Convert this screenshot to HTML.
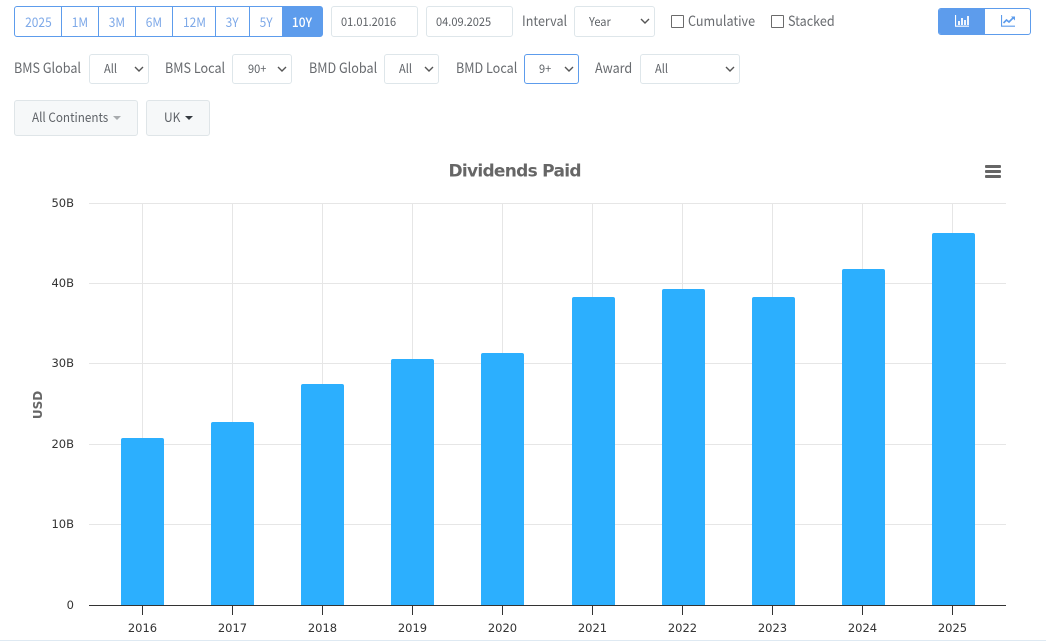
<!DOCTYPE html>
<html><head><meta charset="utf-8">
<style>
html,body{margin:0;padding:0;background:#fff;width:1046px;height:641px;overflow:hidden}
body{position:relative;font-family:"Noto Sans CJK SC","Liberation Sans",sans-serif;color:#66696d}
.a{position:absolute;box-sizing:border-box;white-space:nowrap}
.lbl{font-size:14px;line-height:20px;color:#686b6f;transform:scaleX(.9);transform-origin:left center}
.t{display:inline-block;transform:scaleX(.92);transform-origin:left center}
.in{border:1px solid #dee6ea;border-radius:3px;background:#fff;font-size:12px;color:#5f6368;line-height:29px}
.r2{line-height:27px}
.b{position:absolute;top:6px;height:31px;box-sizing:border-box;text-align:center;font-size:13px;line-height:29px;color:#7ea9e8;border:1px solid #5d9cec;background:#fff}
.b span{display:inline-block;transform:scaleX(.92)}
.dd{border:1px solid #dfe5e8;border-radius:3px;background:#f6f8f9;font-size:13px;color:#5f6368;line-height:32px}
.ch{position:absolute;top:11px;right:4px}
.cb{width:13px;height:13px;border:1px solid #6b6b6b;border-radius:1px;top:15px}
</style></head><body>
<div class="b" style="left:14px;width:48px;border-radius:3px 0 0 3px"><span>2025</span></div>
<div class="b" style="left:61px;width:38px"><span>1M</span></div>
<div class="b" style="left:98px;width:38px"><span>3M</span></div>
<div class="b" style="left:135px;width:38px"><span>6M</span></div>
<div class="b" style="left:172px;width:44px"><span>12M</span></div>
<div class="b" style="left:215px;width:35px"><span>3Y</span></div>
<div class="b" style="left:249px;width:34px"><span>5Y</span></div>
<div class="b" style="left:282px;width:41px;background:#5d9cec;color:#fff;font-weight:500;border-radius:0 3px 3px 0"><span>10Y</span></div>

<div class="a in" style="left:331px;top:6px;width:87px;height:31px;padding-left:9px"><span class="t">01.01.2016</span></div>
<div class="a in" style="left:426px;top:6px;width:87px;height:31px;padding-left:9px"><span class="t">04.09.2025</span></div>
<div class="a lbl" style="left:522px;top:11px">Interval</div>
<div class="a in" style="left:574px;top:6px;width:81px;height:31px;padding-left:14px"><span class="t">Year</span><svg class="ch" width="10" height="7" viewBox="0 0 10 7"><path d="M1 1l4 4 4-4" fill="none" stroke="#555" stroke-width="1.4"/></svg></div>
<div class="a cb" style="left:671px"></div>
<div class="a lbl" style="left:688px;top:11px">Cumulative</div>
<div class="a cb" style="left:771px"></div>
<div class="a lbl" style="left:788px;top:11px">Stacked</div>

<div class="a" style="left:938px;top:8px;width:93px;height:27px;border:1px solid #5d9cec;border-radius:3px;background:#fff;overflow:hidden">
<div class="a" style="left:0;top:0;width:46px;height:25px;background:#5d9cec"></div>
<svg class="a" style="left:16px;top:6px" width="15" height="12" viewBox="0 0 15 12"><path d="M.5 0v11.2H14" fill="none" stroke="#fff" stroke-width="1.2"/><path d="M3 6h2v4H3zM6 3h2v7H6zM9 5h2v5H9zM12 1h2v9h-2z" fill="#fff" opacity=".9"/></svg>
<svg class="a" style="left:62px;top:6px" width="15" height="12" viewBox="0 0 15 12"><path d="M.5 0v11.2H14" fill="none" stroke="#5d9cec" stroke-width="1.2"/><path d="M2.5 8l3-3 2.5 2 4-4" fill="none" stroke="#5d9cec" stroke-width="1.6"/><path d="M10 1.5h4v4z" fill="#5d9cec"/></svg>
</div>

<div class="a lbl" style="left:14px;top:58px">BMS Global</div>
<div class="a in r2" style="left:89px;top:54px;width:60px;height:30px;padding-left:14px"><span class="t">All</span><svg class="ch" width="10" height="7" viewBox="0 0 10 7"><path d="M1 1l4 4 4-4" fill="none" stroke="#555" stroke-width="1.4"/></svg></div>
<div class="a lbl" style="left:165px;top:58px">BMS Local</div>
<div class="a in r2" style="left:232px;top:54px;width:60px;height:30px;padding-left:15px"><span class="t">90+</span><svg class="ch" width="10" height="7" viewBox="0 0 10 7"><path d="M1 1l4 4 4-4" fill="none" stroke="#555" stroke-width="1.4"/></svg></div>
<div class="a lbl" style="left:309px;top:58px">BMD Global</div>
<div class="a in r2" style="left:384px;top:54px;width:55px;height:30px;padding-left:14px"><span class="t">All</span><svg class="ch" width="10" height="7" viewBox="0 0 10 7"><path d="M1 1l4 4 4-4" fill="none" stroke="#555" stroke-width="1.4"/></svg></div>
<div class="a lbl" style="left:456px;top:58px">BMD Local</div>
<div class="a in r2" style="left:524px;top:54px;width:55px;height:30px;padding-left:14px;border-color:#5d9cec"><span class="t">9+</span><svg class="ch" width="10" height="7" viewBox="0 0 10 7"><path d="M1 1l4 4 4-4" fill="none" stroke="#555" stroke-width="1.4"/></svg></div>
<div class="a lbl" style="left:595px;top:58px">Award</div>
<div class="a in r2" style="left:640px;top:54px;width:100px;height:30px;padding-left:14px"><span class="t">All</span><svg class="ch" width="10" height="7" viewBox="0 0 10 7"><path d="M1 1l4 4 4-4" fill="none" stroke="#555" stroke-width="1.4"/></svg></div>

<div class="a dd" style="left:14px;top:100px;width:124px;height:36px;padding-left:17px"><span class="t" style="transform:scaleX(.9)">All Continents</span><span class="a" style="left:98px;top:15px;border:4px solid transparent;border-top-color:#a8abae;border-bottom:0"></span></div>
<div class="a dd" style="left:146px;top:100px;width:64px;height:36px;padding-left:17px"><span class="t">UK</span><span class="a" style="left:38px;top:15px;border:4px solid transparent;border-top-color:#343a40;border-bottom:0"></span></div>

<svg class="a" style="left:0;top:0" width="1046" height="641" viewBox="0 0 1046 641">
<text x="515" y="176.500" text-anchor="middle" font-family="'DejaVu Sans','Liberation Sans',sans-serif" font-size="17" font-weight="700" fill="#666" textLength="133">Dividends Paid</text>
<g fill="#666"><rect x="985" y="165" width="16" height="3" rx="1"/><rect x="985" y="170" width="16" height="3" rx="1"/><rect x="985" y="175" width="16" height="3" rx="1"/></g>
<g stroke="#e6e6e6" stroke-width="1" shape-rendering="crispEdges">
<path d="M89 203.500H1006M89 283.500H1006M89 363.500H1006M89 444.500H1006M89 524.500H1006"/>
<path d="M142.500 203V605M232.500 203V605M322.500 203V605M412.500 203V605M502.500 203V605M592.500 203V605M682.500 203V605M772.500 203V605M862.500 203V605M952.500 203V605"/>
</g>
<g fill="#2caffe">
<path d="M121 605V440a2 2 0 0 1 2-2h39a2 2 0 0 1 2 2V605z"/>
<path d="M211 605V424a2 2 0 0 1 2-2h39a2 2 0 0 1 2 2V605z"/>
<path d="M301 605V386a2 2 0 0 1 2-2h39a2 2 0 0 1 2 2V605z"/>
<path d="M391 605V361a2 2 0 0 1 2-2h39a2 2 0 0 1 2 2V605z"/>
<path d="M481 605V355a2 2 0 0 1 2-2h39a2 2 0 0 1 2 2V605z"/>
<path d="M572 605V299a2 2 0 0 1 2-2h39a2 2 0 0 1 2 2V605z"/>
<path d="M662 605V291a2 2 0 0 1 2-2h39a2 2 0 0 1 2 2V605z"/>
<path d="M752 605V299a2 2 0 0 1 2-2h39a2 2 0 0 1 2 2V605z"/>
<path d="M842 605V271a2 2 0 0 1 2-2h39a2 2 0 0 1 2 2V605z"/>
<path d="M932 605V235a2 2 0 0 1 2-2h39a2 2 0 0 1 2 2V605z"/>
</g>
<g stroke="#333" stroke-width="1" shape-rendering="crispEdges">
<path d="M89 605.500H1006"/>
<path d="M142.500 605V615M232.500 605V615M322.500 605V615M412.500 605V615M502.500 605V615M592.500 605V615M682.500 605V615M772.500 605V615M862.500 605V615M952.500 605V615"/>
</g>
<g font-family="'DejaVu Sans','Liberation Sans',sans-serif" font-size="11.500" fill="#333" text-anchor="end">
<text x="74" y="207">50B</text><text x="74" y="287">40B</text><text x="74" y="367">30B</text><text x="74" y="448">20B</text><text x="74" y="528">10B</text><text x="74" y="609">0</text>
</g>
<g font-family="'DejaVu Sans','Liberation Sans',sans-serif" font-size="11.500" fill="#333" text-anchor="middle">
<text x="142.500" y="632">2016</text><text x="232.500" y="632">2017</text><text x="322.500" y="632">2018</text><text x="412.500" y="632">2019</text><text x="502.500" y="632">2020</text><text x="592.500" y="632">2021</text><text x="682.500" y="632">2022</text><text x="772.500" y="632">2023</text><text x="862.500" y="632">2024</text><text x="952.500" y="632">2025</text>
</g>
<text transform="translate(42 405) rotate(-90)" text-anchor="middle" font-family="'DejaVu Sans','Liberation Sans',sans-serif" font-size="12" font-weight="700" fill="#666">USD</text>
</svg>
<div class="a" style="left:0;top:640px;width:1046px;height:1px;background:#dee9f2"></div>
</body></html>
